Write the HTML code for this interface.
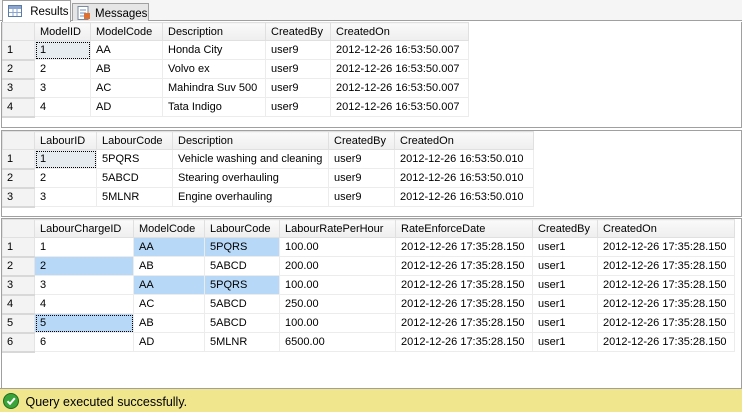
<!DOCTYPE html>
<html><head><style>
*{margin:0;padding:0;box-sizing:border-box}
body{width:742px;height:412px;background:#fff;font-family:"Liberation Sans",Arial,sans-serif;font-size:11px;color:#000;position:relative;overflow:hidden}
.a{position:absolute;white-space:nowrap}
table{border-collapse:collapse;position:absolute;left:2px;table-layout:fixed}
td,th{height:19px;padding:0 0 0 5px;white-space:nowrap;overflow:hidden;text-align:left;font-weight:normal;border:1px solid #ececec}
th{background:linear-gradient(#fafafa,#eeeeee);border-color:#e0e0e0;height:18px}
td.r{background:#f3f3f3;border-bottom:2px solid #d8d8d8;border-right:1px solid #e4e4e4;padding-left:4px}
th.r{background:#f3f3f3}
.s{background:#b8d8f8}
.f{outline:1px dotted #000;outline-offset:-2px}
.sel{background:#e6ebf0}
.panel{position:absolute;left:1px;right:0;border:1px solid #a0a0a0;background:#fff}
</style></head><body>
<div class="a" style="left:0;top:0;width:742px;height:21px;background:#f5f5f5;border-bottom:1px solid #a0a0a0"></div>
<div class="a" style="left:2px;top:0;width:69px;height:22px;background:#fff;border:1px solid #a0a0a0;border-bottom:none;padding:4px 0 0 5px;font-size:11.5px">
<svg width="14" height="12" style="vertical-align:-2px"><rect x="0.5" y="0.5" width="13" height="11" fill="#fff" stroke="#5a7aa8"/><rect x="1" y="1" width="12" height="3" fill="#8aa6d0"/><path d="M1 7.5H13M5 4V11M9 4V11" stroke="#8aa6d0"/></svg>
<span style="margin-left:5px">Results</span></div>
<div class="a" style="left:72px;top:3px;width:77px;height:18px;background:#e6e6e6;border:1px solid #a0a0a0;border-bottom:none;padding:2px 0 0 4px;font-size:11.5px">
<svg width="14" height="14" style="vertical-align:-3px"><rect x="1" y="0.5" width="10" height="13" fill="#fff" stroke="#7a8aa0"/><path d="M3 4H9M3 7H9M3 10H7" stroke="#7090c0"/><rect x="7" y="7" width="6" height="6" fill="#e07030"/></svg><span style="margin-left:4px">Messages</span></div>

<div class="panel" style="top:22px;height:106px;border-top:none"></div>
<div class="panel" style="top:130px;height:87px"></div>
<div class="panel" style="top:218px;height:171px"></div>

<table style="top:22px;width:466px">
<colgroup><col style="width:32px"><col style="width:56px"><col style="width:72px"><col style="width:103px"><col style="width:65px"><col style="width:138px"></colgroup>
<tr><th class="r"></th><th>ModelID</th><th>ModelCode</th><th>Description</th><th>CreatedBy</th><th>CreatedOn</th></tr>
<tr><td class="r">1</td><td class="sel f">1</td><td>AA</td><td>Honda City</td><td>user9</td><td>2012-12-26 16:53:50.007</td></tr>
<tr><td class="r">2</td><td>2</td><td>AB</td><td>Volvo ex</td><td>user9</td><td>2012-12-26 16:53:50.007</td></tr>
<tr><td class="r">3</td><td>3</td><td>AC</td><td>Mahindra Suv 500</td><td>user9</td><td>2012-12-26 16:53:50.007</td></tr>
<tr><td class="r">4</td><td>4</td><td>AD</td><td>Tata Indigo</td><td>user9</td><td>2012-12-26 16:53:50.007</td></tr>
</table>

<table style="top:131px;width:531px">
<colgroup><col style="width:32px"><col style="width:62px"><col style="width:76px"><col style="width:156px"><col style="width:66px"><col style="width:139px"></colgroup>
<tr><th class="r"></th><th>LabourID</th><th>LabourCode</th><th>Description</th><th>CreatedBy</th><th>CreatedOn</th></tr>
<tr><td class="r">1</td><td class="sel f">1</td><td>5PQRS</td><td>Vehicle washing and cleaning</td><td>user9</td><td>2012-12-26 16:53:50.010</td></tr>
<tr><td class="r">2</td><td>2</td><td>5ABCD</td><td>Stearing overhauling</td><td>user9</td><td>2012-12-26 16:53:50.010</td></tr>
<tr><td class="r">3</td><td>3</td><td>5MLNR</td><td>Engine overhauling</td><td>user9</td><td>2012-12-26 16:53:50.010</td></tr>
</table>

<table style="top:219px;width:732px">
<colgroup><col style="width:32px"><col style="width:99px"><col style="width:71px"><col style="width:75px"><col style="width:116px"><col style="width:137px"><col style="width:65px"><col style="width:137px"></colgroup>
<tr><th class="r"></th><th>LabourChargeID</th><th>ModelCode</th><th>LabourCode</th><th>LabourRatePerHour</th><th>RateEnforceDate</th><th>CreatedBy</th><th>CreatedOn</th></tr>
<tr><td class="r">1</td><td>1</td><td class="s">AA</td><td class="s">5PQRS</td><td>100.00</td><td>2012-12-26 17:35:28.150</td><td>user1</td><td>2012-12-26 17:35:28.150</td></tr>
<tr><td class="r">2</td><td class="s">2</td><td>AB</td><td>5ABCD</td><td>200.00</td><td>2012-12-26 17:35:28.150</td><td>user1</td><td>2012-12-26 17:35:28.150</td></tr>
<tr><td class="r">3</td><td>3</td><td class="s">AA</td><td class="s">5PQRS</td><td>100.00</td><td>2012-12-26 17:35:28.150</td><td>user1</td><td>2012-12-26 17:35:28.150</td></tr>
<tr><td class="r">4</td><td>4</td><td>AC</td><td>5ABCD</td><td>250.00</td><td>2012-12-26 17:35:28.150</td><td>user1</td><td>2012-12-26 17:35:28.150</td></tr>
<tr><td class="r">5</td><td class="s f">5</td><td>AB</td><td>5ABCD</td><td>100.00</td><td>2012-12-26 17:35:28.150</td><td>user1</td><td>2012-12-26 17:35:28.150</td></tr>
<tr><td class="r">6</td><td>6</td><td>AD</td><td>5MLNR</td><td>6500.00</td><td>2012-12-26 17:35:28.150</td><td>user1</td><td>2012-12-26 17:35:28.150</td></tr>
</table>

<div class="a" style="left:0;top:388px;width:742px;height:24px;background:#f0e68e;border-top:1px solid #a0a0a0;padding:4px 0 0 3px;font-size:12.5px">
<svg width="16" height="16" style="vertical-align:-3px"><circle cx="8" cy="8" r="7.5" fill="#3aa33a" stroke="#1e6e1e"/><path d="M4.5 8.2L7 10.8L11.8 5.2" stroke="#fff" stroke-width="2" fill="none"/></svg>
<span style="margin-left:3px">Query executed successfully.</span></div>
</body></html>
